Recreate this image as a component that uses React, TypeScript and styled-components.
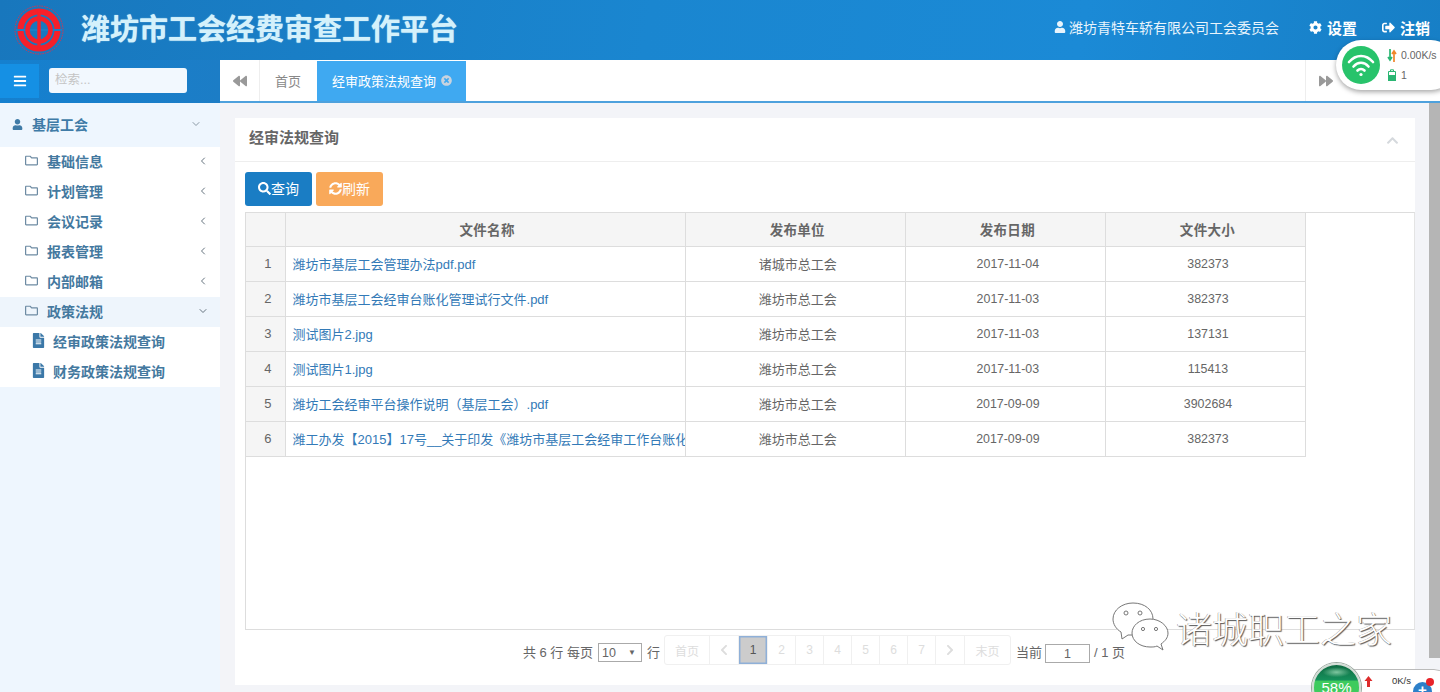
import React from "react";
import styled, { createGlobalStyle } from "styled-components";
import {
  FaUser, FaCog, FaSignOutAlt, FaBars, FaBackward, FaForward, FaRegFolder, FaFileAlt,
  FaSearch, FaSyncAlt, FaTimesCircle, FaChevronUp, FaChevronLeft, FaChevronRight,
} from "react-icons/fa";
import { ChevronLeft, ChevronDown } from "lucide-react";

const SANS = `"Liberation Sans", "Noto Sans CJK SC", sans-serif`;

const Global = createGlobalStyle`
  html, body { margin: 0; padding: 0; height: 100%; overflow: hidden; background: #f3f4f8; }
  body { font-family: ${SANS}; font-size: 13px; color: #666; }
  * { box-sizing: border-box; }
`;

const Page = styled.div`
  position: relative;
  width: 1440px;
  height: 692px;
  overflow: hidden;
  display: flex;
  flex-direction: column;
`;

const Header = styled.header`
  height: 60px;
  flex: none;
  display: flex;
  align-items: center;
  padding: 0 10px 0 14px;
  background: linear-gradient(100deg, #1877bd 0%, #1a86d0 45%, #1b8ad6 75%, #177fc6 100%);
  color: #fff;
`;

const Title = styled.h1`
  margin: 0 0 0 17px;
  font-size: 29px;
  line-height: 60px;
  font-weight: 700;
  color: #d4f1fb;
  text-shadow: 0 0 1px #d4f1fb;
  flex: 1;
`;

const UserName = styled.span`
  display: flex;
  align-items: center;
  gap: 3px;
  font-size: 14px;
  margin: 0 30px 6px 0;
  color: #e8f4fc;
`;

const HeadLink = styled.span<{ $mr?: number }>`
  display: flex;
  align-items: center;
  gap: 5px;
  font-size: 15px;
  font-weight: 700;
  margin: 0 ${(p) => p.$mr ?? 0}px 6px 0;
  svg { font-size: 13px; }
`;

const NavRow = styled.div`
  height: 43px;
  flex: none;
  display: flex;
`;

const NavLeft = styled.div`
  width: 220px;
  flex: none;
  height: 43px;
  display: flex;
  align-items: center;
  gap: 10px;
  padding-bottom: 2px;
  background: linear-gradient(90deg, #1580cf 0%, #1c7dc6 100%);
`;

const MenuButton = styled.div`
  width: 39px;
  height: 34px;
  background: #1590e4;
  color: #fff;
  display: flex;
  align-items: center;
  justify-content: center;
  font-size: 14px;
`;

const SearchBox = styled.div`
  width: 138px;
  height: 25px;
  border-radius: 3px;
  background: #f2f8fe;
  color: #c4c4c4;
  font-size: 12.5px;
  line-height: 25px;
  padding-left: 6px;
`;

const Tabs = styled.div`
  flex: 1;
  display: flex;
  background: #fff;
  border-bottom: 2px solid #4ea1dd;
  height: 43px;
`;

const ArrowTab = styled.div<{ $side: string }>`
  width: 40px;
  display: flex;
  align-items: center;
  justify-content: center;
  color: #999;
  font-size: 14px;
  border-${(p) => p.$side}: 1px solid #eee;
`;

const Tab = styled.div<{ $active?: boolean }>`
  display: flex;
  align-items: center;
  gap: 5px;
  margin-top: ${(p) => (p.$active ? "1px" : "0")};
  padding: 0 ${(p) => (p.$active ? "14px" : "16px")} 1px 15px;
  font-size: 13px;
  color: ${(p) => (p.$active ? "#fff" : "#888")};
  background: ${(p) => (p.$active ? "#3fa9f1" : "#fff")};
  svg { font-size: 11px; color: #c8d3df; }
`;

const TabSpacer = styled.div`
  flex: 1;
`;

const TabEnd = styled.div`
  width: 95px;
  flex: none;
`;

const Body = styled.div`
  flex: 1;
  min-height: 0;
  display: flex;
`;

const Side = styled.aside`
  width: 220px;
  flex: none;
  background: #eef6fe;
`;

const SideHead = styled.div`
  height: 44px;
  display: flex;
  align-items: center;
  padding: 0 18px 2px 12px;
  color: #3f7ba7;
  font-size: 14px;
  font-weight: 700;
  gap: 9px;
  background: #eef6fe;
  span { flex: 1; }
`;

const SideList = styled.div`
  background: #fff;
`;

const SideItem = styled.div<{ $open?: boolean }>`
  height: 30px;
  display: flex;
  align-items: center;
  padding: 0 11px 3px 25px;
  gap: 9px;
  font-size: 14px;
  font-weight: 700;
  color: #44799f;
  background: ${(p) => (p.$open ? "#eef5fc" : "#fff")};
  span { flex: 1; }
  > svg:first-child { font-size: 13px; color: #6d8ba3; }
  > svg:last-child { color: #66747f; }
`;

const SideSub = styled.div`
  height: 30px;
  display: flex;
  align-items: center;
  padding: 0 0 3px 31px;
  gap: 7px;
  font-size: 14px;
  font-weight: 700;
  color: #44799f;
  background: #fff;
  svg { font-size: 15px; color: #3b78a8; }
`;

const Main = styled.main`
  flex: 1;
  min-width: 0;
  display: flex;
  padding: 15px 25px 7px 15px;
  background: #f3f4f8;
`;

const Card = styled.section`
  flex: 1;
  background: #fff;
  display: flex;
  flex-direction: column;
`;

const CardHead = styled.div`
  height: 44px;
  flex: none;
  display: flex;
  align-items: center;
  justify-content: space-between;
  padding: 0 16px 7px 14px;
  border-bottom: 1px solid #eee;
  font-size: 15px;
  font-weight: 700;
  color: #666;
  svg { color: #d5d9dd; font-size: 13px; margin-top: 9px; }
`;

const Toolbar = styled.div`
  display: flex;
  gap: 4px;
  padding: 10px 10px 6px;
  flex: none;
`;

const Btn = styled.button<{ $bg: string }>`
  height: 34px;
  padding: 0 13px 2px;
  border: none;
  border-radius: 3px;
  background: ${(p) => p.$bg};
  color: #fff;
  font-family: ${SANS};
  font-size: 14px;
  display: flex;
  align-items: center;
  svg { font-size: 13px; }
`;

const GridWrap = styled.div`
  height: 418px;
  margin-left: 10px;
  flex: none;
  border: 1px solid #ddd;
  border-right: 1px solid #e4e4e4;
`;

const Table = styled.table`
  border-collapse: collapse;
  table-layout: fixed;
  width: 1060px;
  font-size: 13px;
  color: #666;
`;

const Th = styled.th<{ $w: number }>`
  width: ${(p) => p.$w}px;
  height: 33px;
  background: #f5f5f5;
  border: 1px solid #ddd;
  border-top: none;
  font-size: 13.5px;
  letter-spacing: 0.3px;
  font-weight: 700;
  color: #666;
  padding: 0 0 1px 4px;
  &:first-child { border-left: none; }
`;

const Td = styled.td`
  height: 35px;
  border: 1px solid #ddd;
  text-align: center;
  padding: 0 0 0 5px;
  overflow: hidden;
  white-space: nowrap;
`;

const NumTd = styled(Td)`
  font-size: 12.4px;
  padding-top: 1px;
`;

const IndexTd = styled(Td)`
  background: #f5f5f5;
  border-left: none;
`;

const NameTd = styled(Td)`
  text-align: left;
  padding-left: 7px;
  color: #337ab7;
`;

const Pager = styled.div`
  flex: 1;
  display: flex;
  align-items: flex-start;
  justify-content: center;
  padding: 5px 2px 0 0;
  font-size: 13px;
  color: #666;
  white-space: nowrap;
`;

const PagerText = styled.span<{ $l?: number; $r?: number }>`
  line-height: 35px;
  margin: 0 ${(p) => p.$r ?? 4}px 0 ${(p) => p.$l ?? 4}px;
`;

const SelectBox = styled.span`
  width: 44px;
  height: 19px;
  margin-top: 8px;
  border: 1px solid #aaa;
  display: flex;
  align-items: center;
  justify-content: space-between;
  padding: 0 5px 0 3px;
  font-size: 12.5px;
  i { font-style: normal; font-size: 8px; }
`;

const PageGroup = styled.div`
  display: flex;
  height: 30px;
  border: 1px solid #f0f0f0;
  border-radius: 3px;
  color: #ddd;
  font-size: 12px;
`;

const PageCell = styled.span<{ $w: number; $active?: boolean }>`
  width: ${(p) => p.$w}px;
  display: flex;
  align-items: center;
  justify-content: center;
  border-right: 1px solid #f0f0f0;
  &:last-child { border-right: none; }
  ${(p) => p.$active && `background: #ccc; color: #555; box-shadow: inset 0 0 0 1.5px #8fb0d8;`}
`;

const PageInput = styled.span`
  width: 45px;
  height: 19px;
  margin-top: 9px;
  border: 1px solid #aaa;
  text-align: center;
  line-height: 18px;
  font-size: 12.5px;
`;

const Scrollbar = styled.div`
  position: absolute;
  right: 0;
  top: 103px;
  width: 11px;
  height: 555px;
  background: #b5b5b5;
`;

const WifiPill = styled.div`
  position: absolute;
  left: 1336px;
  top: 40px;
  width: 120px;
  height: 50px;
  border-radius: 25px;
  background: #fff;
  box-shadow: 0 2px 5px rgba(0,0,0,.35);
  display: flex;
  align-items: center;
  padding-left: 6px;
  gap: 7px;
  font-size: 10.5px;
  color: #666;
`;

const WifiCircle = styled.div`
  width: 38px;
  height: 38px;
  border-radius: 50%;
  background: #28c36b;
  display: flex;
  align-items: center;
  justify-content: center;
`;

const WifiStats = styled.div`
  display: flex;
  flex-direction: column;
  gap: 7px;
`;

const WifiLine = styled.div`
  display: flex;
  align-items: center;
  gap: 4px;
  height: 13px;
`;

const Watermark = styled.div`
  position: absolute;
  left: 1112px;
  top: 602px;
  display: flex;
  align-items: center;
  gap: 6px;
`;

const WatermarkText = styled.span`
  font-family: "Noto Sans CJK SC", sans-serif;
  font-size: 36px;
  font-weight: 300;
  line-height: 46px;
  color: #fff;
  text-shadow: 1px 1px 1px #555, -0.5px 0 0 #999;
`;

const MeterPill = styled.div`
  position: absolute;
  left: 1340px;
  top: 669px;
  width: 110px;
  height: 40px;
  border-radius: 16px 16px 0 0;
  background: #fff;
  border: 1px solid #bbb;
  display: flex;
  padding: 5px 0 0 23px;
  font-size: 9.5px;
  color: #333;
`;

const MeterArrow = styled.svg`
  width: 9px;
  height: 11px;
  margin: 1px 19px 0 0;
`;

const MeterGauge = styled.div`
  position: absolute;
  left: 1312px;
  top: 663px;
  width: 49px;
  height: 49px;
  border-radius: 50%;
  background: radial-gradient(ellipse 14px 5px at 50% 16%, #7fc7a0 0%, transparent 100%), linear-gradient(180deg, #0f6a42 0%, #16915c 34%, #3ecb5e 35%, #3ecb5e 100%);
  border: 2px solid #d3ddd6;
  box-shadow: 0 0 0 1px #9aa79f;
  color: #fff;
  font-size: 15px;
  line-height: 16px;
  text-align: center;
  padding-top: 15px;
`;

const PlusBadge = styled.div`
  position: absolute;
  left: 1413px;
  top: 682px;
  width: 19px;
  height: 19px;
  border-radius: 50%;
  background: #2d7fc9;
  color: #fff;
  font-size: 15px;
  font-weight: 700;
  line-height: 16px;
  text-align: center;
`;

const RedDot = styled.div`
  position: absolute;
  left: 1426px;
  top: 678px;
  width: 8px;
  height: 8px;
  border-radius: 50%;
  background: #e8242a;
`;

const Logo = () => (
  <svg width="50" height="50" viewBox="0 0 50 50">
    <circle cx="25" cy="25" r="24" fill="none" stroke="#d9344f" strokeWidth="1" strokeDasharray="1.5 1" />
    <circle cx="25" cy="25" r="18.5" fill="none" stroke="#f5202a" strokeWidth="6" />
    <rect x="2" y="24" width="46" height="2" fill="#1a80c8" />
    <circle cx="25" cy="25" r="11.5" fill="none" stroke="#f5202a" strokeWidth="4.5" />
    <rect x="23.3" y="5" width="3.4" height="40" fill="#f5202a" />
  </svg>
);

const WifiIcon = () => (
  <svg width="28" height="24" viewBox="0 0 28 24" fill="none" stroke="#fff" strokeWidth="2.6" strokeLinecap="round">
    <path d="M2 9 C9 1 19 1 26 9" />
    <path d="M6.5 13.5 C11 8.5 17 8.5 21.5 13.5" />
    <path d="M10.5 17.5 C12.5 15.5 15.5 15.5 17.5 17.5" />
    <circle cx="14" cy="21.5" r="1.6" fill="#fff" stroke="none" />
  </svg>
);

const WeChat = () => (
  <svg width="58" height="50" viewBox="0 0 58 50" fill="#fff" stroke="#777" strokeWidth="1">
    <path d="M21 1 C10 1 1 8 1 17 C1 22 4 27 9 30 L10 37 L16 33 C18 33 20 33 22 33 C36 33 41 25 41 17 C41 8 33 1 21 1 Z" />
    <path d="M38 17 C27 17 20 24 20 31 C20 39 28 45 38 45 C41 45 43 45 45 44 L51 48 L49 42 C53 39 56 36 56 31 C56 24 48 17 38 17 Z" />
    <circle cx="14" cy="11" r="2" fill="none" />
    <circle cx="28" cy="11" r="2" fill="none" />
    <circle cx="31" cy="27" r="1.6" fill="none" />
    <circle cx="44" cy="27" r="1.6" fill="none" />
  </svg>
);

const rows = [
  ["潍坊市基层工会管理办法pdf.pdf", "诸城市总工会", "2017-11-04", "382373"],
  ["潍坊市基层工会经审台账化管理试行文件.pdf", "潍坊市总工会", "2017-11-03", "382373"],
  ["测试图片2.jpg", "潍坊市总工会", "2017-11-03", "137131"],
  ["测试图片1.jpg", "潍坊市总工会", "2017-11-03", "115413"],
  ["潍坊工会经审平台操作说明（基层工会）.pdf", "潍坊市总工会", "2017-09-09", "3902684"],
  ["潍工办发【2015】17号__关于印发《潍坊市基层工会经审工作台账化", "潍坊市总工会", "2017-09-09", "382373"],
];

export default function App() {
  return (
    <Page>
      <Global />
      <Header>
        <Logo />
        <Title>潍坊市工会经费审查工作平台</Title>
        <UserName><FaUser size={12} />潍坊青特车轿有限公司工会委员会</UserName>
        <HeadLink $mr={25}><FaCog />设置</HeadLink>
        <HeadLink><FaSignOutAlt />注销</HeadLink>
      </Header>
      <NavRow>
        <NavLeft>
          <MenuButton><FaBars /></MenuButton>
          <SearchBox>检索...</SearchBox>
        </NavLeft>
        <Tabs>
          <ArrowTab $side="right"><FaBackward /></ArrowTab>
          <Tab>首页</Tab>
          <Tab $active>经审政策法规查询<FaTimesCircle /></Tab>
          <TabSpacer />
          <ArrowTab $side="left"><FaForward /></ArrowTab>
          <TabEnd />
        </Tabs>
      </NavRow>
      <Body>
        <Side>
          <SideHead><FaUser size={11} /><span>基层工会</span><ChevronDown size={12} color="#8a99a5" /></SideHead>
          <SideList>
            {["基础信息", "计划管理", "会议记录", "报表管理", "内部邮箱"].map((t) => (
              <SideItem key={t}><FaRegFolder /><span>{t}</span><ChevronLeft size={12} /></SideItem>
            ))}
            <SideItem $open><FaRegFolder /><span>政策法规</span><ChevronDown size={12} /></SideItem>
            <SideSub><FaFileAlt />经审政策法规查询</SideSub>
            <SideSub><FaFileAlt />财务政策法规查询</SideSub>
          </SideList>
        </Side>
        <Main>
          <Card>
            <CardHead>经审法规查询<FaChevronUp /></CardHead>
            <Toolbar>
              <Btn $bg="#1a7dc4"><FaSearch />查询</Btn>
              <Btn $bg="#f9a95a"><FaSyncAlt />刷新</Btn>
            </Toolbar>
            <GridWrap>
              <Table>
                <thead>
                  <tr>
                    <Th $w={39} />
                    <Th $w={400}>文件名称</Th>
                    <Th $w={220}>发布单位</Th>
                    <Th $w={200}>发布日期</Th>
                    <Th $w={200}>文件大小</Th>
                  </tr>
                </thead>
                <tbody>
                  {rows.map((r, i) => (
                    <tr key={i}>
                      <IndexTd>{i + 1}</IndexTd>
                      <NameTd>{r[0]}</NameTd>
                      <Td>{r[1]}</Td>
                      <NumTd>{r[2]}</NumTd>
                      <NumTd>{r[3]}</NumTd>
                    </tr>
                  ))}
                </tbody>
              </Table>
            </GridWrap>
            <Pager>
              <PagerText $r={5}>共 6 行 每页</PagerText>
              <SelectBox>10<i>▼</i></SelectBox>
              <PagerText $l={5}>行</PagerText>
              <PageGroup>
                <PageCell $w={45}>首页</PageCell>
                <PageCell $w={29}><FaChevronLeft /></PageCell>
                <PageCell $w={29} $active>1</PageCell>
                {[2, 3, 4, 5, 6, 7].map((n) => <PageCell key={n} $w={28}>{n}</PageCell>)}
                <PageCell $w={29}><FaChevronRight /></PageCell>
                <PageCell $w={45}>末页</PageCell>
              </PageGroup>
              <PagerText $l={5} $r={3}>当前</PagerText>
              <PageInput>1</PageInput>
              <PagerText>/ 1 页</PagerText>
            </Pager>
          </Card>
        </Main>
      </Body>
      <Scrollbar />
      <WifiPill>
        <WifiCircle><WifiIcon /></WifiCircle>
        <WifiStats>
          <WifiLine><svg width="10" height="13" viewBox="0 0 10 13"><path d="M3 0v11M1 8l2 3 2-3" stroke="#2bb673" strokeWidth="1.7" fill="none" /><path d="M7 13V2M5 5l2-3 2 3" stroke="#f0862b" strokeWidth="1.7" fill="none" /></svg>0.00K/s</WifiLine>
          <WifiLine><svg width="10" height="12" viewBox="0 0 10 12"><path d="M1.5 2.5h7v9h-7z" fill="none" stroke="#2bb673" /><path d="M1 6h8v6H1z" fill="#2bb673" /><path d="M3.5 2V.8h3V2" stroke="#2bb673" fill="none" /></svg><span>1</span></WifiLine>
        </WifiStats>
      </WifiPill>
      <Watermark><WeChat /><WatermarkText>诸城职工之家</WatermarkText></Watermark>
      <MeterPill>
        <MeterArrow viewBox="0 0 9 11"><path d="M4.5 0L8.5 5H6v6H3V5H.5z" fill="#dd2c2c" /></MeterArrow>
        <span>0K/s</span>
      </MeterPill>
      <MeterGauge>58%</MeterGauge>
      <PlusBadge>+</PlusBadge>
      <RedDot />
    </Page>
  );
}
